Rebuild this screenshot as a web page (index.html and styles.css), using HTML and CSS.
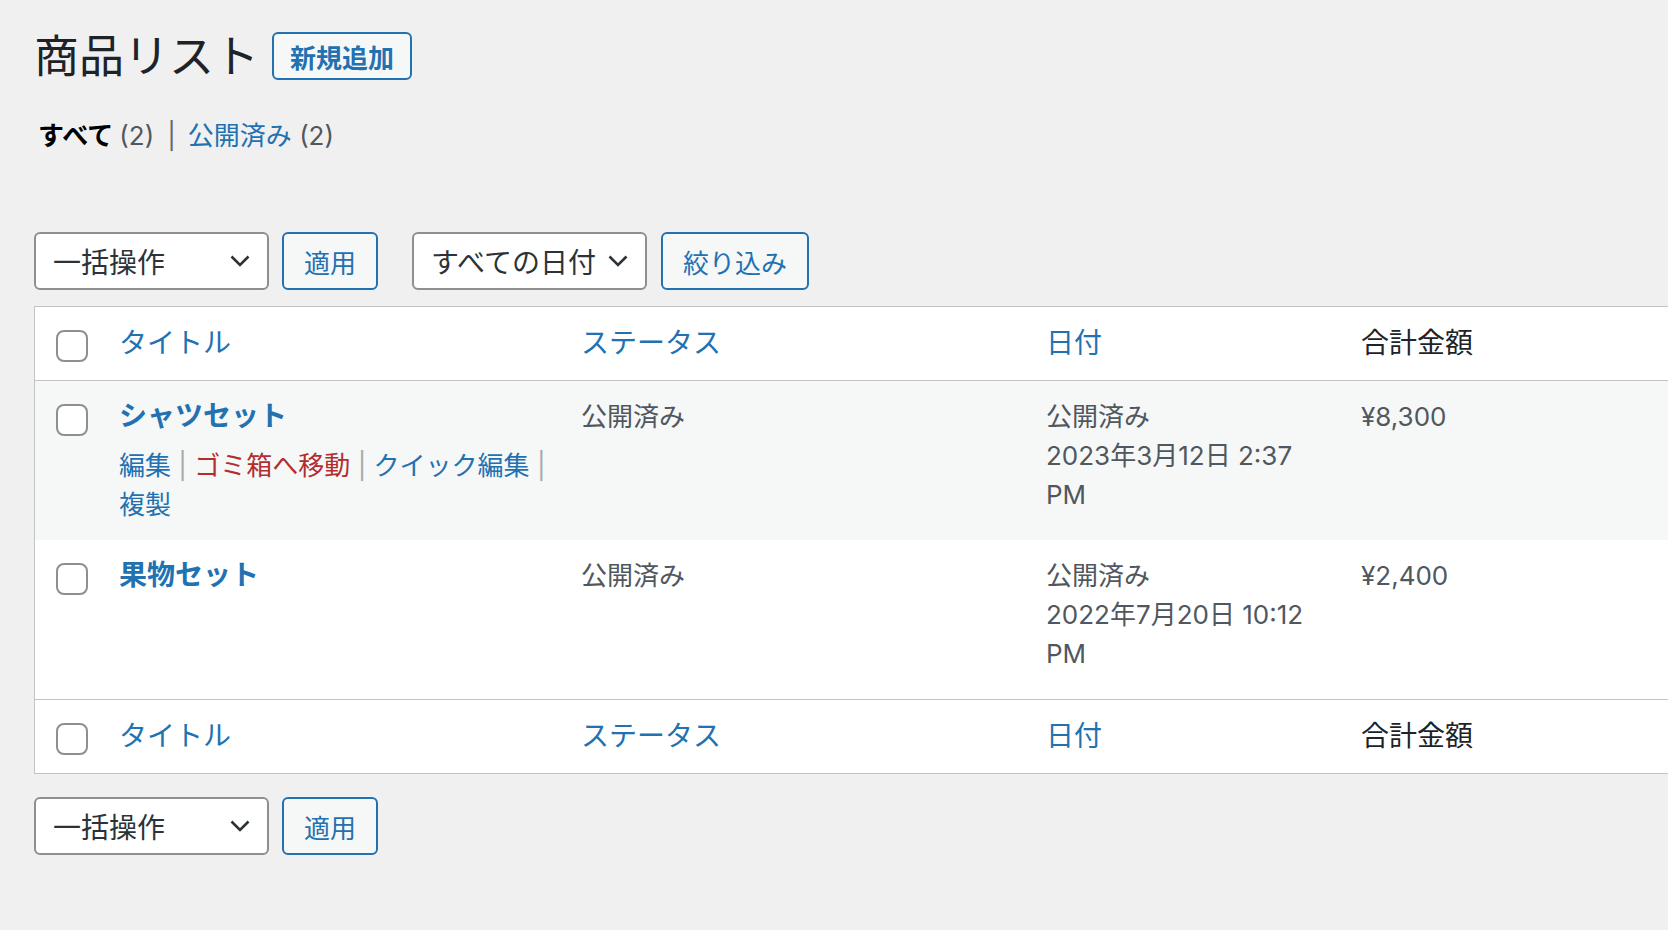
FILE: index.html
```html
<!DOCTYPE html>
<html lang="ja">
<head>
    <meta charset="UTF-8">
    <meta name="viewport" content="width=device-width, initial-scale=1.0">
    <title>商品リスト</title>
    <link rel="stylesheet" href="styles.css">
</head>
<body>
    <div class="wrap">
        <div class="pageHead">
            <h1 class="pageTitle">商品リスト</h1>
            <a class="addNew" href="#">新規追加</a>
        </div>

        <ul class="subsubsub">
            <li><a class="current" href="#">すべて <span class="count">(2)</span></a></li>
            <li class="sep">|</li>
            <li><a href="#">公開済み</a> <span class="count">(2)</span></li>
        </ul>

        <div class="tablenav tablenavTop">
            <div class="selectBox">
                <span>一括操作</span>
                <svg class="chevron" width="20" height="12" viewBox="0 0 20 12"><path d="M1.5 1.5 L10 10 L18.5 1.5" /></svg>
            </div>
            <button class="button">適用</button>
            <div class="selectBox dateSelect">
                <span>すべての日付</span>
                <svg class="chevron" width="20" height="12" viewBox="0 0 20 12"><path d="M1.5 1.5 L10 10 L18.5 1.5" /></svg>
            </div>
            <button class="button filterButton">絞り込み</button>
        </div>

        <table class="listTable">
            <colgroup>
                <col class="colCheck">
                <col class="colTitle">
                <col class="colStatus">
                <col class="colDate">
                <col>
            </colgroup>
            <thead>
                <tr>
                    <th class="checkColumn"><input type="checkbox"></th>
                    <th><a href="#">タイトル</a></th>
                    <th><a href="#">ステータス</a></th>
                    <th><a href="#">日付</a></th>
                    <th>合計金額</th>
                </tr>
            </thead>
            <tbody>
                <tr class="alt">
                    <td class="checkColumn"><input type="checkbox"></td>
                    <td class="titleCell">
                        <a class="rowTitle" href="#">シャツセット</a>
                        <div class="rowActions">
                            <span><a href="#">編集</a> <i>|</i> </span>
                            <span><a class="trash" href="#">ゴミ箱へ移動</a> <i>|</i> </span>
                            <span><a href="#">クイック編集</a> <i>|</i> </span>
                            <span><a href="#">複製</a></span>
                        </div>
                    </td>
                    <td>公開済み</td>
                    <td>公開済み<br>2023年3月12日 2:37 PM</td>
                    <td>¥8,300</td>
                </tr>
                <tr>
                    <td class="checkColumn"><input type="checkbox"></td>
                    <td class="titleCell">
                        <a class="rowTitle" href="#">果物セット</a>
                        <div class="rowActions hidden">
                            <span><a href="#">編集</a> <i>|</i> </span>
                            <span><a class="trash" href="#">ゴミ箱へ移動</a> <i>|</i> </span>
                            <span><a href="#">クイック編集</a> <i>|</i> </span>
                            <span><a href="#">複製</a></span>
                        </div>
                    </td>
                    <td>公開済み</td>
                    <td>公開済み<br>2022年7月20日 10:12 PM</td>
                    <td>¥2,400</td>
                </tr>
            </tbody>
            <tfoot>
                <tr>
                    <th class="checkColumn"><input type="checkbox"></th>
                    <th><a href="#">タイトル</a></th>
                    <th><a href="#">ステータス</a></th>
                    <th><a href="#">日付</a></th>
                    <th>合計金額</th>
                </tr>
            </tfoot>
        </table>

        <div class="tablenav tablenavBottom">
            <div class="selectBox">
                <span>一括操作</span>
                <svg class="chevron" width="20" height="12" viewBox="0 0 20 12"><path d="M1.5 1.5 L10 10 L18.5 1.5" /></svg>
            </div>
            <button class="button">適用</button>
        </div>
    </div>
</body>
</html>
```

FILE: styles.css
```css
body {
    margin: 0;
    background: #f0f0f1;
    color: #3c434a;
    font-family: Inter, "Noto Sans CJK JP", sans-serif;
    overflow: hidden;
}

a {
    color: #2271b1;
    text-decoration: none;
}

.wrap {
    padding: 32px 0 0 34px;
}

.pageHead {
    display: flex;
    align-items: center;
    height: 48px;
}

.pageTitle {
    margin: 0;
    font-size: 45px;
    font-weight: 400;
    line-height: 1;
    color: #1d2327;
}

.addNew {
    display: flex;
    align-items: center;
    box-sizing: border-box;
    height: 48px;
    margin-left: 13px;
    padding: 0 16px;
    border: 2px solid #2271b1;
    border-radius: 6px;
    background: #f6f7f7;
    font-size: 26px;
    font-weight: 700;
}

.subsubsub {
    display: flex;
    margin: 36px 0 0;
    padding: 0 0 0 4px;
    list-style: none;
    font-size: 26px;
    line-height: 39px;
    color: #646970;
}

.subsubsub .current {
    color: #000;
    font-weight: 700;
}

.subsubsub .count {
    color: #50575e;
    font-weight: 400;
}

.subsubsub .sep {
    padding: 0 12px 0 13px;
}

.tablenav {
    display: flex;
    height: 58px;
}

.tablenavTop {
    margin-top: 77px;
}

.tablenavBottom {
    margin-top: 23px;
}

.selectBox {
    display: flex;
    align-items: center;
    justify-content: space-between;
    box-sizing: border-box;
    width: 235px;
    height: 58px;
    padding: 0 17px;
    border: 2px solid #8c8f94;
    border-radius: 6px;
    background: #fff;
    font-size: 28px;
    color: #2c3338;
}

.chevron path {
    fill: none;
    stroke: #2c3338;
    stroke-width: 2.6;
}

.dateSelect {
    margin-left: 34px;
}

.button {
    box-sizing: border-box;
    height: 58px;
    margin-left: 13px;
    padding: 0 20px;
    border: 2px solid #2271b1;
    border-radius: 6px;
    background: #f6f7f7;
    color: #2271b1;
    font-family: inherit;
    font-size: 26px;
}

.filterButton {
    margin-left: 14px;
}

.listTable {
    width: 100%;
    margin-top: 16px;
    table-layout: fixed;
    border-collapse: separate;
    border-spacing: 0;
    background: #fff;
    border: 1px solid #c3c4c7;
    border-right: none;
}

.colCheck {
    width: 64px;
}

.colTitle {
    width: 462px;
}

.colStatus {
    width: 465px;
}

.colDate {
    width: 315px;
}

.listTable th {
    padding: 16px 20px;
    font-size: 28px;
    font-weight: 400;
    line-height: 41px;
    text-align: left;
    vertical-align: top;
    color: #1d2327;
}

.listTable thead th {
    border-bottom: 1px solid #c3c4c7;
}

.listTable tfoot th {
    border-top: 1px solid #c3c4c7;
}

.listTable td {
    padding: 16px 20px;
    font-size: 26px;
    line-height: 39px;
    vertical-align: top;
    color: #50575e;
}

.listTable td.titleCell {
    padding-right: 6px;
}

.listTable tr.alt td {
    background: #f6f7f7;
}

.listTable .checkColumn {
    padding: 23px 0 0 21px;
}

.checkColumn input {
    display: block;
    appearance: none;
    width: 32px;
    height: 32px;
    margin: 0;
    border: 2px solid #8c8f94;
    border-radius: 8px;
    background: #fff;
}

.rowTitle {
    display: block;
    margin-bottom: 10px;
    font-size: 28px;
    font-weight: 700;
    line-height: 39px;
}

.rowActions span {
    white-space: nowrap;
}

.rowActions i {
    font-style: normal;
    color: #a7aaad;
}

.rowActions .trash {
    color: #b32d2e;
}

.rowActions.hidden {
    visibility: hidden;
}
```
